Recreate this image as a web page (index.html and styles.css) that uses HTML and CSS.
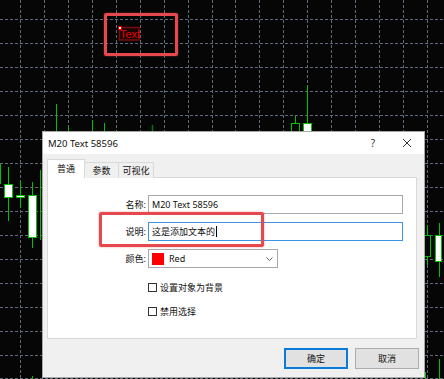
FILE: index.html
```html
<!DOCTYPE html>
<html lang="zh-CN">
<head>
    <meta charset="UTF-8">
    <title>M20 Text 58596</title>
    <link rel="stylesheet" href="styles.css">
</head>
<body>
    <div class="screen">
        <!-- chart: grid, candles and the text object -->
        <svg class="chart" width="444" height="379" viewBox="0 0 444 379">
            <g class="grid">
                <path d="M20.5 0V379M44.5 0V379M68.5 0V379M92.5 0V379M116.5 0V379M140.5 0V379M164.5 0V379M188.5 0V379M212.5 0V379M235.5 0V379M259.5 0V379M283.5 0V379M307.5 0V379M331.5 0V379M355.5 0V379M379.5 0V379M403.5 0V379M427.5 0V379"/>
                <path d="M0 19.5H444M0 43.5H444M0 67.5H444M0 91.5H444M0 115.5H444M0 139.5H444M0 163.5H444M0 187.5H444M0 211.5H444M0 235.5H444M0 259.5H444M0 283.5H444M0 307.5H444M0 331.5H444M0 355.5H444M0 378.5H444"/>
            </g>
            <g class="wicks">
                <path d="M0.5 164V184M8.5 167V221M20.5 181V208M32.5 182V248M40.5 170V240M32.5 376V379"/>
                <path d="M56.5 104V131M68.5 127V131M92.5 120V131M104.5 123V131M116.5 130V131M295.5 116V131M307.5 85V131"/>
                <path d="M427.5 225V265M439.5 223V277M425.5 372V379M439.5 359V379"/>
                <path class="dim" d="M152.5 125V131"/>
            </g>
            <g class="bodies">
                <rect class="up" x="4.5" y="184.5" width="8" height="13"/>
                <rect class="up" x="16.5" y="195.5" width="8" height="2"/>
                <rect class="up" x="28.5" y="195.5" width="8" height="42"/>
                <rect class="down" x="291.5" y="123.5" width="8" height="10"/>
                <rect class="up" x="303.5" y="123.5" width="8" height="10"/>
                <rect class="down" x="424.5" y="235.5" width="6" height="21"/>
                <rect class="up" x="435.5" y="235.5" width="6" height="26"/>
            </g>
            <g class="text-object">
                <rect class="select" x="119.5" y="27.5" width="19.5" height="12.5"/>
                <text x="120" y="38">Text</text>
                <rect class="anchor" x="118.5" y="26.5" width="3" height="3"/>
            </g>
        </svg>

        <div class="mark mark-top"></div>

        <div class="dialog">
            <div class="titlebar">
                <span class="title">M20 Text 58596</span>
                <span class="help">?</span>
                <svg class="close" width="10" height="10" viewBox="0 0 10 10">
                    <path d="M1 1L9 9M9 1L1 9"/>
                </svg>
            </div>
            <div class="dlg-body">
                <div class="tabs">
                    <div class="tab active">普通</div>
                    <div class="tab">参数</div>
                    <div class="tab">可视化</div>
                </div>
                <div class="panel">
                    <div class="form">
                        <span class="label">名称:</span>
                        <div class="field">M20 Text 58596</div>
                        <span class="label">说明:</span>
                        <div class="field focused">这是添加文本的<span class="caret"></span></div>
                        <span class="label">颜色:</span>
                        <div class="select-box">
                            <span class="swatch"></span>
                            <span class="select-text">Red</span>
                            <svg class="chevron" width="7" height="4" viewBox="0 0 7 4">
                                <path d="M0.5 0.5L3.5 3.5L6.5 0.5"/>
                            </svg>
                        </div>
                    </div>
                    <div class="checks">
                        <div class="check"><span class="box"></span>设置对象为背景</div>
                        <div class="check"><span class="box"></span>禁用选择</div>
                    </div>
                </div>
                <div class="buttons">
                    <div class="btn default">确定</div>
                    <div class="btn">取消</div>
                </div>
            </div>
        </div>

        <div class="mark mark-desc"></div>
    </div>
</body>
</html>
```

FILE: styles.css
```css
body {
    margin: 0;
    background-color: #060606;
    font-family: "Noto Sans", "Noto Sans CJK SC", sans-serif;
    font-size: 9px;
    color: #111;
}
.screen {
    position: relative;
    width: 444px;
    height: 379px;
    overflow: hidden;
    background-color: #060606;
}
.chart {
    position: absolute;
    left: 0;
    top: 0;
}
.grid path {
    stroke: #5f6977;
    stroke-width: 1;
    stroke-dasharray: 3 2;
    fill: none;
}
.wicks path {
    stroke: #00c000;
    stroke-width: 1;
    fill: none;
}
.wicks .dim {
    stroke: #007a00;
    stroke-width: 1.5;
}
.bodies rect {
    stroke: #00c000;
    stroke-width: 1;
}
.bodies .up {
    fill: #ffffff;
}
.bodies .down {
    fill: #060606;
}
.text-object .select {
    fill: #1a0303;
    stroke: #7c0c0c;
    stroke-width: 1.5;
}
.text-object text {
    font-family: "Liberation Sans", sans-serif;
    font-size: 11px;
    fill: #e80000;
}
.text-object .anchor {
    fill: #ffffff;
    stroke: #e00000;
    stroke-width: 1;
}

/* red annotation frames */
.mark {
    position: absolute;
    border: 3px solid #e5484d;
    border-radius: 2px;
    box-shadow: 0 0 2px rgba(229, 72, 77, 0.6);
    z-index: 5;
}
.mark-top {
    left: 104px;
    top: 13px;
    width: 68px;
    height: 37px;
}
.mark-desc {
    left: 99px;
    top: 212px;
    width: 159px;
    height: 29px;
}

/* dialog window */
.dialog {
    position: absolute;
    left: 42px;
    top: 131px;
    width: 383px;
    height: 247px;
    box-sizing: border-box;
    border: 1px solid #a8a8a8;
    background-color: #f0f0f0;
    display: flex;
    flex-direction: column;
}
.titlebar {
    height: 22px;
    background-color: #ffffff;
    display: flex;
    align-items: center;
    padding-left: 5px;
    flex-shrink: 0;
}
.title {
    flex: 1;
    font-size: 9.5px;
}
.help {
    font-size: 10px;
    color: #333;
    margin-right: 27px;
}
.close {
    margin-right: 12px;
}
.close path {
    stroke: #333;
    stroke-width: 1;
    fill: none;
}
.dlg-body {
    padding: 6px 7px 0 4px;
}
.tabs {
    display: flex;
    align-items: flex-end;
    height: 18px;
    position: relative;
    z-index: 1;
    margin-bottom: -1px;
}
.tab {
    box-sizing: border-box;
    height: 16px;
    border: 1px solid #d9d9d9;
    border-bottom: none;
    background-color: #f0f0f0;
    display: flex;
    align-items: center;
    justify-content: center;
    margin-left: -1px;
}
.tab:nth-child(2) {
    width: 35px;
}
.tab:nth-child(3) {
    width: 36px;
}
.tab.active {
    width: 38px;
    height: 19px;
    margin-left: 0;
    background-color: #ffffff;
    position: relative;
    z-index: 2;
    padding-bottom: 1px;
}
.panel {
    box-sizing: border-box;
    height: 162px;
    border: 1px solid #d9d9d9;
    background-color: #ffffff;
    padding: 17px 13px 0 0;
}
.form {
    display: grid;
    grid-template-columns: 98px 1fr;
    column-gap: 2px;
    row-gap: 8px;
    align-items: center;
}
.label {
    text-align: right;
}
.field {
    box-sizing: border-box;
    height: 19px;
    border: 1px solid #a9a9a9;
    padding-left: 3px;
    display: flex;
    align-items: center;
}
.field.focused {
    border-color: #3f94df;
}
.caret {
    width: 1px;
    height: 11px;
    background-color: #000;
    margin-left: 1px;
}
.select-box {
    box-sizing: border-box;
    width: 130px;
    height: 19px;
    border: 1px solid #a9a9a9;
    display: flex;
    align-items: center;
    padding-left: 3px;
}
.swatch {
    width: 12px;
    height: 12px;
    background-color: #ff0000;
    margin-right: 5px;
}
.select-text {
    flex: 1;
}
.chevron {
    margin-right: 4px;
}
.chevron path {
    stroke: #666;
    stroke-width: 1;
    fill: none;
}
.checks {
    padding-left: 100px;
    margin-top: 13px;
    display: flex;
    flex-direction: column;
    gap: 11px;
}
.check {
    height: 13px;
    display: flex;
    align-items: center;
}
.box {
    box-sizing: border-box;
    width: 9px;
    height: 9px;
    border: 1px solid #333;
    background-color: #fff;
    margin-right: 3px;
}
.buttons {
    display: flex;
    justify-content: flex-end;
    gap: 7px;
    margin-top: 9px;
    margin-right: -2px;
}
.btn {
    box-sizing: border-box;
    width: 64px;
    height: 21px;
    background-color: #e1e1e1;
    border: 1px solid #adadad;
    display: flex;
    align-items: center;
    justify-content: center;
}
.btn.default {
    border: 2px solid #0a7bd8;
}
```
